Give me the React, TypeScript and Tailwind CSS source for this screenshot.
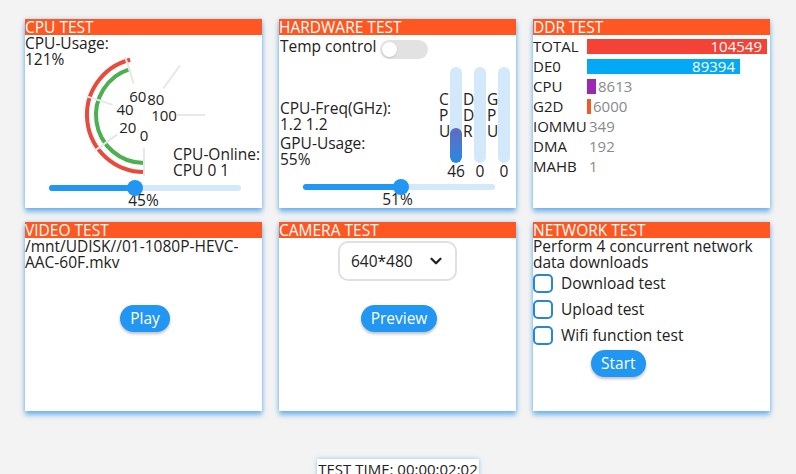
import { ChevronDown } from "lucide-react";

function Card({ title, children }: { title: string; children?: React.ReactNode }) {
  return (
    <div className="flex h-[189px] flex-col bg-white shadow-[0_4px_5px_rgba(30,136,229,0.55),0_0_4px_rgba(33,150,243,0.35)]">
      <div className="h-4 bg-[#ff5722] text-[15.5px] leading-4 whitespace-nowrap text-white">
        {title}
      </div>
      <div className="relative flex flex-1 flex-col">{children}</div>
    </div>
  );
}

function Slider({ value }: { value: number }) {
  return (
    <div className="relative ml-[24px] h-5 w-[192px]">
      <div className="absolute inset-x-0 top-[7px] h-[6px] rounded-full bg-[#d3e8fb]" />
      <div
        className="absolute left-0 top-[7px] h-[6px] rounded-full bg-[#2196f3]"
        style={{ width: `${value}%` }}
      />
      <div
        className="absolute top-[2px] h-4 w-4 -translate-x-1/2 rounded-full bg-[#2196f3]"
        style={{ left: `${value}%` }}
      />
    </div>
  );
}

function Button({ label, className = "" }: { label: string; className?: string }) {
  return (
    <button
      className={
        "h-[27px] rounded-full bg-[#2196f3] px-[10px] text-[15.5px] leading-[27px] text-white shadow-[0_2px_3px_rgba(0,0,0,0.25)] " +
        className
      }
    >
      {label}
    </button>
  );
}

// polar helper for the gauge, angle in degrees, screen coords
const pt = (r: number, a: number) => {
  const rad = (a * Math.PI) / 180;
  return [119 + r * Math.cos(rad), 80 + r * Math.sin(rad)];
};

function Gauge() {
  const arc = (r: number, end: number) => {
    const [x0, y0] = pt(r, 90);
    const [x1, y1] = pt(r, end);
    return `M${x0} ${y0} A${r} ${r} 0 0 1 ${x1} ${y1}`;
  };
  const ticks = [90, 144, 198, 252, 306, 360];
  const labels = ["0", "20", "40", "60", "80", "100"];
  return (
    <svg className="pointer-events-none absolute left-0 top-0" width="237" height="150">
      <path d={arc(57, 256)} fill="none" stroke="#e84a3c" strokeWidth="4" />
      <path d={arc(48, 253)} fill="none" stroke="#4caf50" strokeWidth="4" />
      {ticks.map((a) => {
        const [x0, y0] = pt(33, a);
        const [x1, y1] = pt(61, a);
        return <line key={a} x1={x0} y1={y0} x2={x1} y2={y1} stroke="#e8e8e8" strokeWidth="2" />;
      })}
      {ticks.map((a, i) => {
        const [x, y] = pt(20, a);
        return (
          <text
            key={a}
            x={x}
            y={y}
            textAnchor="middle"
            dominantBaseline="central"
            fontSize="15"
            fill="#222"
            fontFamily="'Open Sans', sans-serif"
          >
            {labels[i]}
          </text>
        );
      })}
    </svg>
  );
}

function VBar({ label, value, fill }: { label: string; value: number; fill: number }) {
  return (
    <div className="relative flex w-[12px] flex-col items-center">
      <div className="relative h-[96px] w-[12px] overflow-hidden rounded-full bg-[#d3e8fb]">
        {fill > 0 && (
          <div
            className="absolute bottom-0 left-0 w-full rounded-full bg-gradient-to-b from-[#5c6bc0] to-[#1e88e5]"
            style={{ height: fill }}
          />
        )}
      </div>
      <div className="leading-4">{value}</div>
      <div className="absolute left-[-11px] top-[24px] flex w-[9px] flex-col leading-4">
        {label.split("").map((c, i) => (
          <span key={i}>{c}</span>
        ))}
      </div>
    </div>
  );
}

const ddr = [
  { name: "TOTAL", value: 104549, w: 180, color: "bg-[#f44336]", inside: true },
  { name: "DE0", value: 89394, w: 153, color: "bg-[#03a9f4]", inside: true },
  { name: "CPU", value: 8613, w: 9, color: "bg-[#9c27b0]", inside: false },
  { name: "G2D", value: 6000, w: 4, color: "bg-[#f05a28]", inside: false },
  { name: "IOMMU", value: 349, w: 0, color: "", inside: false },
  { name: "DMA", value: 192, w: 0, color: "", inside: false },
  { name: "MAHB", value: 1, w: 0, color: "", inside: false },
];

export default function App() {
  return (
    <div className="min-h-screen w-full bg-[#f3f3f3] pl-[25px] pt-[19px] font-['Open_Sans','Noto_Sans',sans-serif] text-[15.5px] text-[#222]">
      <div className="grid grid-cols-[237px_237px_237px] gap-x-[17px] gap-y-[14px]">
        {/* CPU */}
        <Card title="CPU TEST">
          <Gauge />
          <div className="leading-4">
            CPU-Usage:
            <br />
            121%
          </div>
          <div className="flex-1" />
          <div className="ml-[148px] whitespace-nowrap leading-4">
            CPU-Online:
            <br />
            CPU 0 1
          </div>
          <Slider value={45} />
          <div className="-mt-[6px] text-center leading-4">45%</div>
        </Card>

        {/* Hardware */}
        <Card title="HARDWARE TEST">
          <div className="flex h-[24px] items-start pt-[3px]">
            <span className="pl-[1px] leading-4">Temp control</span>
            <div className="relative ml-[4px] mt-[2px] h-[19px] w-[48px] rounded-full bg-[#e2e2e2]">
              <div className="absolute left-[2px] top-[2px] h-[15px] w-[15px] rounded-full bg-white shadow-[0_1px_2px_rgba(0,0,0,0.15)]" />
            </div>
          </div>
          <div className="mt-[8px] flex h-[112px]">
            <div className="flex flex-1 flex-col justify-end pb-[12px] pl-[1px] leading-4">
              <div>
                CPU-Freq(GHz):
                <br />
                1.2 1.2
              </div>
              <div className="mt-[3px]">
                GPU-Usage:
                <br />
                55%
              </div>
            </div>
            <div className="flex gap-[12px] pr-[6px]">
              <VBar label="CPU" value={46} fill={35} />
              <VBar label="DDR" value={0} fill={0} />
              <VBar label="GPU" value={0} fill={0} />
            </div>
          </div>
          <div className="-mt-[2px]">
            <Slider value={51} />
          </div>
          <div className="-mt-[6px] text-center leading-4">51%</div>
        </Card>

        {/* DDR */}
        <Card title="DDR TEST">
          <div className="flex flex-col pt-[1px] text-[15px]">
            {ddr.map((r) => (
              <div key={r.name} className="flex h-5 items-center">
                <div className="w-[54px] shrink-0 whitespace-nowrap leading-4">{r.name}</div>
                {r.inside ? (
                  <div
                    className={`h-[15px] ${r.color} pr-[5px] text-right leading-[15px] text-white`}
                    style={{ width: r.w }}
                  >
                    {r.value}
                  </div>
                ) : (
                  <>
                    {r.w > 0 && <div className={`h-[15px] ${r.color}`} style={{ width: r.w }} />}
                    <span className="ml-[2px] leading-4 text-[#8a8a8a]">{r.value}</span>
                  </>
                )}
              </div>
            ))}
          </div>
        </Card>

        {/* Video */}
        <Card title="VIDEO TEST">
          <div className="leading-4">
            /mnt/UDISK//01-1080P-HEVC-
            <br />
            AAC-60F.mkv
          </div>
          <Button label="Play" className="ml-[3px] mt-[35px] self-center" />
        </Card>

        {/* Camera */}
        <Card title="CAMERA TEST">
          <div className="mt-[3px] flex h-[40px] w-[119px] items-center justify-between self-center rounded-[10px] border-2 border-[#e0e0e0] pl-[11px] pr-[10px]">
            <span className="leading-4">640*480</span>
            <ChevronDown size={18} strokeWidth={3} className="text-[#222]" />
          </div>
          <Button label="Preview" className="ml-[3px] mt-[24px] self-center" />
        </Card>

        {/* Network */}
        <Card title="NETWORK TEST">
          <div className="leading-4">
            Perform 4 concurrent network
            <br />
            data downloads
          </div>
          {["Download test", "Upload test", "Wifi function test"].map((t) => (
            <div key={t} className="flex h-[26px] items-center">
              <div className="h-[19px] w-[20px] rounded-[5px] border-2 border-[#2b86d2]" />
              <span className="ml-[8px] leading-4">{t}</span>
            </div>
          ))}
          <Button label="Start" className="ml-[58px] mt-[2px] self-start" />
        </Card>
      </div>

      <div className="-ml-[25px] mt-[48px] flex justify-center">
        <div className="h-5 bg-white px-[1px] text-[15px] leading-5 shadow-[0_0_4px_rgba(33,150,243,0.5)]">
          TEST TIME: 00:00:02:02
        </div>
      </div>
    </div>
  );
}
